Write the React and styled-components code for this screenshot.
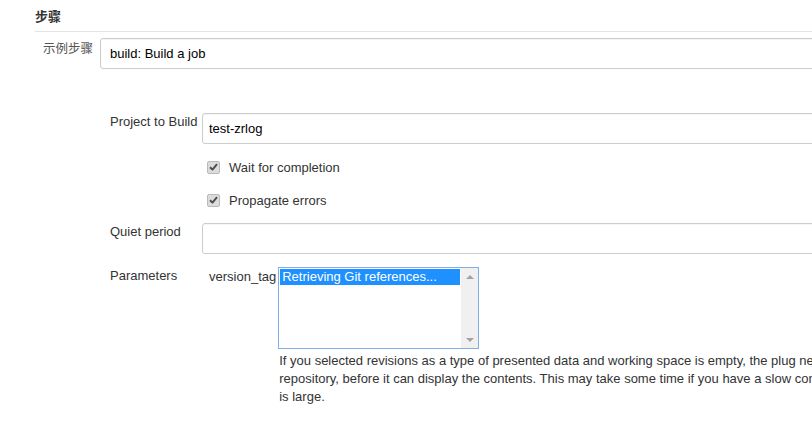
import React from "react";
import styled, { createGlobalStyle } from "styled-components";

const GlobalStyle = createGlobalStyle`
  html, body {
    margin: 0;
    padding: 0;
    background: #fff;
    overflow: hidden;
  }
  body {
    font-family: "Liberation Sans", Arial, "Noto Sans CJK SC", sans-serif;
    font-size: 13px;
    color: #333;
  }
`;

export default function App() {
  return (
    <>
      <GlobalStyle />
      <Page>
        <SectionTitle>步骤</SectionTitle>

        <StepRow>
          <StepLabel>示例步骤</StepLabel>
          <TextBox pad="9px">build: Build a job</TextBox>
        </StepRow>

        <Nested>
          <FieldRow>
            <FieldLabel>Project to Build</FieldLabel>
            <TextBox pad="6px">test-zrlog</TextBox>
          </FieldRow>

          <CheckRow gap="14px">
            <CheckBox>
              <CheckMark />
            </CheckBox>
            Wait for completion
          </CheckRow>
          <CheckRow gap="15px">
            <CheckBox>
              <CheckMark />
            </CheckBox>
            Propagate errors
          </CheckRow>

          <FieldRow gap="14px">
            <FieldLabel>Quiet period</FieldLabel>
            <TextBox pad="6px" />
          </FieldRow>

          <FieldRow gap="13px">
            <FieldLabel>Parameters</FieldLabel>
            <ParamBlock>
              <ParamName>version_tag</ParamName>
              <ParamValue>
                <ListBox>
                  <Options>
                    <Option selected>Retrieving Git references...</Option>
                  </Options>
                  <ScrollTrack>
                    <ScrollButton>
                      <Arrow />
                    </ScrollButton>
                    <ScrollButton>
                      <Arrow down />
                    </ScrollButton>
                  </ScrollTrack>
                </ListBox>
                <HelpText>
                  If you selected revisions as a type of presented data and
                  working space is empty, the plug needs to clone the
                  <br />
                  repository, before it can display the contents. This may take
                  some time if you have a slow connection or the repository
                  <br />
                  is large.
                </HelpText>
              </ParamValue>
            </ParamBlock>
          </FieldRow>
        </Nested>
      </Page>
    </>
  );
}

const CheckMark = () => (
  <svg width="9" height="8" viewBox="0 0 9 8">
    <path
      d="M1 4.2 L3.5 6.6 L8 1.2"
      fill="none"
      stroke="#4a4a4a"
      strokeWidth="1.9"
      strokeLinejoin="round"
    />
  </svg>
);

const Page = styled.div`
  width: 1100px;
  padding-left: 35px;
`;

const SectionTitle = styled.div`
  padding-top: 8px;
  padding-bottom: 5px;
  line-height: 18px;
  font-weight: bold;
  color: #333;
  border-bottom: 1px solid #e3e3e3;
`;

const StepRow = styled.div`
  display: flex;
  align-items: flex-start;
  margin-top: 6px;
  padding-left: 8px;
`;

const StepLabel = styled.div`
  width: 57px;
  line-height: 18px;
  padding-top: 1px;
  color: #555;
  font-family: "Noto Sans CJK SC", sans-serif;
  font-size: 12.5px;
`;

const TextBox = styled.div`
  flex: 1;
  box-sizing: border-box;
  height: 31px;
  line-height: 29px;
  padding-left: ${(p) => p.pad || "6px"};
  border: 1px solid #ccc;
  border-radius: 3px;
  box-shadow: inset 0 1px 1px rgba(0, 0, 0, 0.04);
  color: #000;
  background: #fff;
`;

const Nested = styled.div`
  margin-top: 44px;
  padding-left: 75px;
`;

const FieldRow = styled.div`
  display: flex;
  align-items: flex-start;
  margin-top: ${(p) => p.gap || "0"};
`;

const FieldLabel = styled.div`
  width: 92px;
  flex-shrink: 0;
  line-height: 18px;
  color: #333;
`;

const CheckRow = styled.label`
  display: flex;
  align-items: center;
  height: 18px;
  margin-top: ${(p) => p.gap};
  margin-left: 97px;
  color: #333;
`;

const CheckBox = styled.span`
  box-sizing: border-box;
  width: 13px;
  height: 13px;
  margin-right: 9px;
  display: flex;
  align-items: center;
  justify-content: center;
  background: #dcdcdc;
  border: 1px solid #b9b9b9;
  border-radius: 2px;
`;

const ParamBlock = styled.div`
  display: flex;
  align-items: flex-start;
  padding-left: 7px;
`;

const ParamName = styled.div`
  line-height: 18px;
  padding-top: 1px;
  margin-right: 2px;
  color: #333;
`;

const ParamValue = styled.div`
  display: flex;
  flex-direction: column;
`;

const ListBox = styled.div`
  box-sizing: border-box;
  width: 201px;
  height: 82px;
  display: flex;
  border: 1px solid #7eaee6;
  background: #fff;
`;

const Options = styled.div`
  flex: 1;
  padding: 1px;
`;

const Option = styled.div`
  height: 16px;
  line-height: 16px;
  padding-left: 2px;
  color: ${(p) => (p.selected ? "#fff" : "#000")};
  background: ${(p) => (p.selected ? "#1e90ff" : "transparent")};
  white-space: nowrap;
  overflow: hidden;
`;

const ScrollTrack = styled.div`
  width: 17px;
  display: flex;
  flex-direction: column;
  justify-content: space-between;
  background: #f0f0f0;
`;

const ScrollButton = styled.div`
  height: 17px;
  display: flex;
  align-items: center;
  justify-content: center;
`;

const Arrow = styled.span`
  width: 0;
  height: 0;
  border-left: 4px solid transparent;
  border-right: 4px solid transparent;
  ${(p) =>
    p.down
      ? "border-top: 4px solid #a3a3a3;"
      : "border-bottom: 4px solid #a3a3a3;"}
`;

const HelpText = styled.div`
  margin-top: 3px;
  padding-left: 1px;
  line-height: 18px;
  white-space: nowrap;
  color: #333;
`;
